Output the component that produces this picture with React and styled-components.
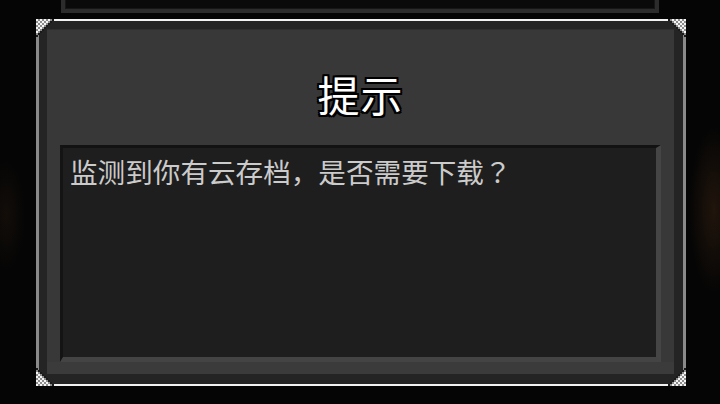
import React from 'react';
import styled, { createGlobalStyle } from 'styled-components';

const GlobalStyle = createGlobalStyle`
  html, body {
    margin: 0;
    padding: 0;
    background: #050505;
  }
  body {
    font-family: "Noto Sans CJK SC", "Noto Sans", sans-serif;
  }
`;

const Screen = styled.div`
  width: 720px;
  height: 404px;
  overflow: hidden;
  display: flex;
  flex-direction: column;
  gap: 6px;
  background:
    radial-gradient(ellipse 36px 120px at 714px 210px, rgba(40, 25, 14, 0.8), transparent 70%),
    radial-gradient(ellipse 28px 80px at 6px 215px, rgba(30, 20, 12, 0.55), transparent 70%),
    #050505;
`;

/* the dialog stacked behind, only its lower rim shows */
const BackPanel = styled.div`
  box-sizing: border-box;
  margin-left: 61px;
  width: 598px;
  height: 13px;
  flex-shrink: 0;
  border: 4px solid #2c2c2c;
  border-top: none;
  background: #0a0a0a;
  box-shadow: inset 1px -1px 0 #161616, inset -1px 0 0 #161616;
`;

const Dialog = styled.div`
  position: relative;
  box-sizing: border-box;
  margin-left: 36px;
  width: 650px;
  height: 367px;
  flex-shrink: 0;
  border-top: 2px solid #f2f2f2;
  border-bottom: 2px solid #f2f2f2;
  border-left: 3px solid #8a8a8a;
  border-right: 3px solid #8a8a8a;
  background: #242424;
  padding: 8px 9px 10px 8px;
  display: flex;
`;

const Corner = styled.svg`
  position: absolute;
  width: 18px;
  height: 18px;
  ${p => p.$top ? 'top: -2px;' : 'bottom: -2px;'}
  ${p => p.$left ? 'left: -3px;' : 'right: -3px;'}
  transform: scale(${p => p.$left ? 1 : -1}, ${p => p.$top ? 1 : -1});
`;

const Panel = styled.div`
  flex: 1;
  display: flex;
  flex-direction: column;
  background: #383838;
  padding: 0 13px;
  border-top: 1px solid #2f2f2f;
`;

const Title = styled.div`
  height: 115px;
  box-sizing: border-box;
  padding-top: 12px;
  display: flex;
  align-items: center;
  justify-content: center;
  color: #ffffff;
  font-size: 42px;
  font-weight: 400;
  letter-spacing: 1px;
  text-shadow:
    -2px 0 0 #000, 2px 0 0 #000, 0 -2px 0 #000, 0 2px 0 #000,
    -2px -2px 0 #000, 2px 2px 0 #000, -2px 2px 0 #000, 2px -2px 0 #000;
`;

const MessageWell = styled.div`
  box-sizing: border-box;
  height: 217px;
  border-top: 3px solid #121212;
  border-left: 3px solid #141414;
  border-right: 5px solid #454545;
  border-bottom: 5px solid #444444;
  background: #1e1e1e;
  padding: 5px 7px;
  color: #cbcbcb;
  font-size: 27.6px;
  font-weight: 400;
  line-height: 36px;
`;

/* centred full-width question mark */
const Mark = styled.span`
  font-family: "Noto Sans CJK TC", "Noto Sans CJK SC", sans-serif;
`;

const PanelFoot = styled.div`
  flex: 1;
  background: #3b3b3b;
  margin: 0 -13px;
`;

const cornerCells = () => {
  const cells = [];
  for (let i = 0; i < 9; i++) {
    for (let j = 0; j + i < 9; j++) {
      const edge = i + j === 8;
      const fill = edge ? '#1a1a1a' : (i + j) % 2 === 0 ? '#f4f4f4' : '#8c8c8c';
      cells.push(<rect key={`${i}-${j}`} x={i * 2} y={j * 2} width="2" height="2" fill={fill} />);
    }
  }
  return cells;
};

const PixelCorner = ({ top, left }) => (
  <Corner $top={top} $left={left} viewBox="0 0 18 18" shapeRendering="crispEdges">
    {cornerCells()}
  </Corner>
);

export default function App() {
  return (
    <>
      <GlobalStyle />
      <Screen>
        <BackPanel />
        <Dialog>
          <Panel>
            <Title>提示</Title>
            <MessageWell>监测到你有云存档，是否需要下载<Mark>？</Mark></MessageWell>
            <PanelFoot />
          </Panel>
          <PixelCorner top left />
          <PixelCorner top />
          <PixelCorner left />
          <PixelCorner />
        </Dialog>
      </Screen>
    </>
  );
}
